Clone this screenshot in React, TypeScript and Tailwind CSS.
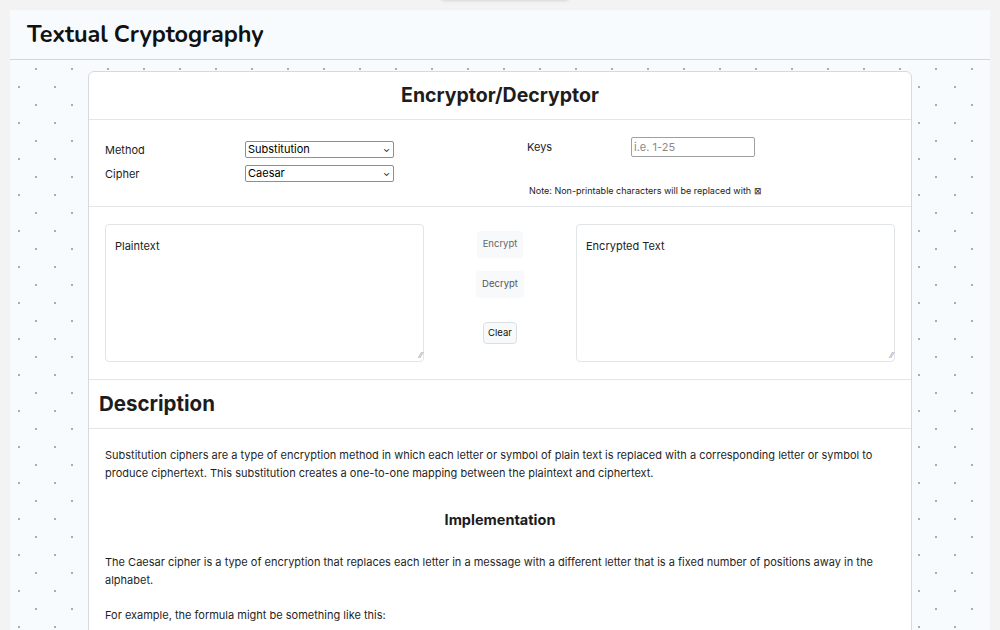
import React from "react";

const dots: React.CSSProperties = {
  backgroundColor: "#f7fbfe",
  backgroundImage:
    "radial-gradient(circle, #a9adb1 0.9px, transparent 1.3px), radial-gradient(circle, #a9adb1 0.9px, transparent 1.3px)",
  backgroundSize: "36px 36px, 36px 36px",
  backgroundPosition: "8px -9px, -9px 9px",
};

export default function App() {
  const body = { fontFamily: "Inter, 'Noto Sans', sans-serif" };
  return (
    <div className="w-[1000px] h-[630px] overflow-hidden bg-[#f3f3f3] px-[10px] pt-[10px] relative" style={body}>
      <div className="absolute left-[440px] top-[-10px] w-[130px] h-[10px] rounded-full shadow-[0_1px_3px_rgba(0,0,0,0.12)] bg-[#f3f3f3]" />
      <div className="bg-[#f7fbfe] h-[50px] border-b border-[#cfd6dc] flex items-center px-[17px]">
        <h1 className="text-[23.5px] font-bold text-[#111] tracking-[-0.1px]" style={{ fontFamily: "Nunito, 'Open Sans', Lato, sans-serif" }}>
          Textual Cryptography
        </h1>
      </div>
      <div className="h-[700px] pt-[11px] px-[78px]" style={dots}>
        <div className="bg-white border border-[#d5dade] rounded-[6px] text-[#1c1c1c]">
          <div className="h-[48px] flex items-center justify-center border-b border-[#e4e7ea]">
            <h2 className="text-[19.5px] font-bold text-[#1d1d1d]">Encryptor/Decryptor</h2>
          </div>
          <div className="h-[87px] border-b border-[#e4e7ea] flex pl-[16px] pt-[21px]">
            <div className="w-[422px] flex flex-col gap-[8px]">
              <div className="flex items-center h-[16px]">
                <span className="w-[140px] text-[11px] pt-[2px]">Method</span>
                <div className="w-[149px] h-[17px] border border-[#8f8f8f] rounded-[2px] flex items-center justify-between px-[2px] text-[11px] text-black">
                  <span>Substitution</span>
                  <span className="text-[9px] pr-[1px]">⌄</span>
                </div>
              </div>
              <div className="flex items-center h-[16px]">
                <span className="w-[140px] text-[11px] pt-[3px]">Cipher</span>
                <div className="w-[149px] h-[17px] border border-[#8f8f8f] rounded-[2px] flex items-center justify-between px-[2px] text-[11px] text-black">
                  <span>Caesar</span>
                  <span className="text-[9px] pr-[1px]">⌄</span>
                </div>
              </div>
            </div>
            <div className="flex flex-col">
              <div className="flex items-center mt-[-4px]">
                <span className="w-[104px] text-[11px]">Keys</span>
                <div className="w-[124px] h-[20px] border border-[#a0a0a0] rounded-[2px] flex items-center px-[2px] text-[11px] text-[#8a8a8a]">
                  i.e. 1-25
                </div>
              </div>
              <div className="text-[9px] mt-[27px] ml-[2px] text-[#222]">Note: Non-printable characters will be replaced with ⊠</div>
            </div>
          </div>
          <div className="h-[173px] border-b border-[#e4e7ea] flex items-start pt-[17px] px-[16px] justify-between">
            <div className="w-[319px] h-[138px] border border-[#e2e5e8] rounded-[4px] px-[9px] pt-[13px] text-[11px] text-[#222] relative">
              Plaintext
              <span className="absolute right-[1px] bottom-[0px] text-[7px] text-[#888]">⁄⁄</span>
            </div>
            <div className="flex flex-col items-center pt-[7px] w-[60px]">
              <div className="px-[6px] h-[27px] flex items-center bg-[#f8f9fa] rounded-[3px] text-[9.5px] text-[#666]">Encrypt</div>
              <div className="px-[6px] h-[27px] flex items-center bg-[#f8f9fa] rounded-[3px] text-[9.5px] text-[#555] mt-[13px]">Decrypt</div>
              <div className="px-[4px] h-[22px] flex items-center border border-[#dcdfe2] bg-[#f8f9fa] rounded-[4px] text-[9.5px] text-[#111] mt-[24px]">Clear</div>
            </div>
            <div className="w-[319px] h-[138px] border border-[#e2e5e8] rounded-[4px] px-[9px] pt-[13px] text-[11px] text-[#222] relative">
              Encrypted Text
              <span className="absolute right-[1px] bottom-[0px] text-[7px] text-[#888]">⁄⁄</span>
            </div>
          </div>
          <div className="h-[49px] border-b border-[#e4e7ea] flex items-center px-[10px]">
            <h2 className="text-[20.5px] font-bold text-[#1d1d1d]">Description</h2>
          </div>
          <div className="px-[16px] pt-[17px] pb-[60px] text-[11px] leading-[18px] text-[#1f1f1f]">
            <p>
              Substitution ciphers are a type of encryption method in which each letter or symbol of plain text is replaced with a corresponding letter or symbol to produce ciphertext. This substitution creates a one-to-one mapping between the plaintext and ciphertext.
            </p>
            <h3 className="text-center text-[14.5px] font-bold mt-[29px] mb-[24px] text-[#1b1b1b]">Implementation</h3>
            <p>
              The Caesar cipher is a type of encryption that replaces each letter in a message with a different letter that is a fixed number of positions away in the alphabet.
            </p>
            <p className="mt-[17px]">For example, the formula might be something like this:</p>
          </div>
        </div>
      </div>
    </div>
  );
}
